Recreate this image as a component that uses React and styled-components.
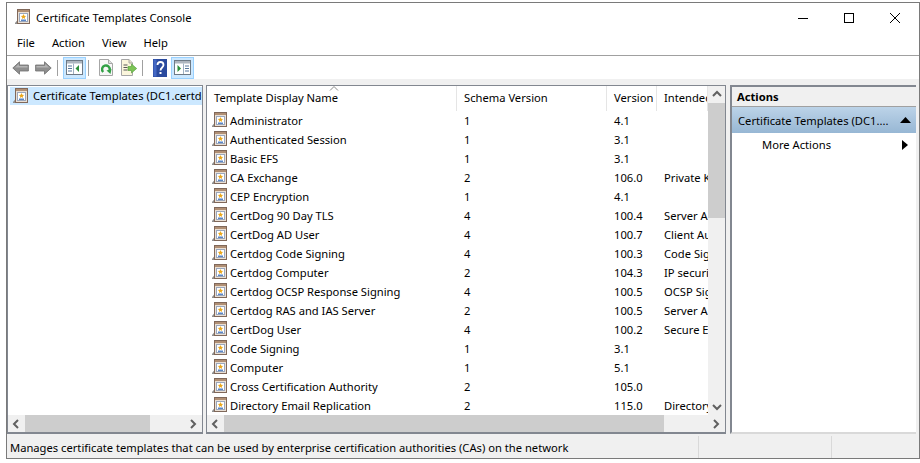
import React from 'react'
import styled, { createGlobalStyle } from 'styled-components'

const GlobalStyle = createGlobalStyle`
  html, body { margin: 0; padding: 0; background: #fff; }
  body { font-family: "Noto Sans", "Open Sans", "Liberation Sans", sans-serif; font-size: 11.2px; color: #000; }
  * { box-sizing: border-box; }
  svg { flex: none; display: block; }
`

const rows = [
  ['Administrator', '1', '4.1', ''],
  ['Authenticated Session', '1', '3.1', ''],
  ['Basic EFS', '1', '3.1', ''],
  ['CA Exchange', '2', '106.0', 'Private Key Archival'],
  ['CEP Encryption', '1', '4.1', ''],
  ['CertDog 90 Day TLS', '4', '100.4', 'Server Authentication'],
  ['CertDog AD User', '4', '100.7', 'Client Authentication'],
  ['Certdog Code Signing', '4', '100.3', 'Code Signing'],
  ['Certdog Computer', '2', '104.3', 'IP security'],
  ['Certdog OCSP Response Signing', '4', '100.5', 'OCSP Signing'],
  ['Certdog RAS and IAS Server', '2', '100.5', 'Server Authentication'],
  ['CertDog User', '4', '100.2', 'Secure Email'],
  ['Code Signing', '1', '3.1', ''],
  ['Computer', '1', '5.1', ''],
  ['Cross Certification Authority', '2', '105.0', ''],
  ['Directory Email Replication', '2', '115.0', 'Directory Service'],
]

const CertIcon = () => (
  <svg width="16" height="16" viewBox="0 0 16 16">
    <path d="M0 14 L2.5 11 V15 H0 Z" fill="#8f8f8f" />
    <rect x="2.5" y="0.5" width="12" height="14" fill="#e9dfd4" stroke="#80685a" />
    <rect x="3" y="1" width="11" height="2" fill="#b08f74" />
    <rect x="4.5" y="4.5" width="8" height="8" fill="#fff" stroke="#9aa7bd" />
    <path d="M8.5 5 l.8 1.7 l1.8 .2 l-1.3 1.3 l.3 1.8 l-1.6 -.9 l-1.6 .9 l.3 -1.8 l-1.3 -1.3 l1.8 -.2 z" fill="#eba81e" />
    <rect x="6" y="10.5" width="5" height="1.5" fill="#5b86c6" />
  </svg>
)

const BackIcon = ({ flip }) => (
  <svg width="17" height="14" viewBox="0 0 17 14" style={{ transform: flip ? 'scaleX(-1)' : 'none' }}>
    <path d="M0.8 7 L7.5 0.8 V4 H16.4 V10 H7.5 V13.2 Z" fill="#8f8f8f" stroke="#6f6f6f" strokeWidth="0.8" />
    <path d="M6.8 3 V5 H15.6 V6.6 H3 Z" fill="#b5b5b5" />
  </svg>
)

const PaneIcon = ({ right }) => (
  <svg width="17" height="15" viewBox="0 0 17 15">
    <rect x="0.5" y="0.5" width="16" height="14" fill="#fff" stroke="#6e7a86" />
    <rect x="1" y="1" width="15" height="2.5" fill="#aeb6bf" />
    {right ? (
      <>
        <path d="M9.5 3.5 V14" stroke="#9fb0c2" />
        <path d="M11 6 H15 M11 8.5 H15 M11 11 H15" stroke="#56779c" />
        <path d="M3.5 5 L7 8.5 L3.5 12 Z" fill="#2c8f39" />
      </>
    ) : (
      <>
        <path d="M7.5 3.5 V14" stroke="#9fb0c2" />
        <path d="M2 6 H6 M2 8.5 H6 M2 11 H6" stroke="#56779c" />
        <path d="M13 5 L9.5 8.5 L13 12 Z" fill="#2c8f39" />
      </>
    )}
  </svg>
)

const RefreshIcon = () => (
  <svg width="14" height="17" viewBox="0 0 14 17">
    <path d="M0.5 0.5 H9.5 L13.5 4.5 V16.5 H0.5 Z" fill="#f7f7f7" stroke="#a6a6a6" />
    <path d="M9.5 .5 V4.5 H13.5" fill="#dedede" stroke="#a6a6a6" />
    <path d="M4.2 13 A3.8 3.8 0 1 1 10.6 11" fill="none" stroke="#32a045" strokeWidth="2.4" />
    <path d="M7.5 11.5 L12.5 10 L11.5 15 Z" fill="#32a045" />
  </svg>
)

const ExportIcon = () => (
  <svg width="16" height="17" viewBox="0 0 16 17">
    <path d="M0.5 0.5 H8 L11.5 4 V16.5 H0.5 Z" fill="#fbf6dc" stroke="#a6a6a6" />
    <path d="M8 .5 V4 H11.5" fill="#e6e0c4" stroke="#a6a6a6" />
    <path d="M2.5 6 H6.5 M2.5 8.5 H6.5 M2.5 11 H6.5" stroke="#555" />
    <path d="M7 7.5 H10.5 V5 L15.7 9.5 L10.5 14 V11.5 H7 Z" fill="#7cc455" stroke="#4d9a35" strokeWidth="0.6" />
  </svg>
)

const HelpIcon = () => (
  <svg width="14" height="18" viewBox="0 0 14 18">
    <rect width="14" height="18" fill="#2a4a9e" />
    <rect x="0.5" y="0.5" width="3" height="17" fill="#4468c4" />
    <path d="M4.5 6 C4.5 2 10.5 2 10.5 6 C10.5 8.5 7.5 8.5 7.5 11.5" fill="none" stroke="#fff" strokeWidth="1.8" />
    <rect x="6.5" y="13" width="2" height="2" fill="#fff" />
  </svg>
)

const Arrow = ({ dir }) => {
  const d = {
    left: 'M6 1 L2 5 L6 9',
    right: 'M2 1 L6 5 L2 9',
    up: 'M1 6 L5 2 L9 6',
    down: 'M1 3 L5 7 L9 3',
  }[dir]
  return (
    <svg width="10" height="10" viewBox="0 0 10 10">
      <path d={d} fill="none" stroke="#606060" strokeWidth="2" />
    </svg>
  )
}

const App = () => (
  <>
    <GlobalStyle />
    <Page>
      <Window>
        <TitleBar>
          <CertIcon />
          <Title>Certificate Templates Console</Title>
          <Caption>
            <svg width="12" height="12" viewBox="0 0 12 12"><path d="M1 6.5 H11" stroke="#000" /></svg>
            <svg width="12" height="12" viewBox="0 0 12 12"><rect x="1.5" y="1.5" width="9" height="9" fill="none" stroke="#000" /></svg>
            <svg width="12" height="12" viewBox="0 0 12 12"><path d="M1 1 L11 11 M11 1 L1 11" stroke="#000" /></svg>
          </Caption>
        </TitleBar>
        <MenuBar>
          <MenuItem>File</MenuItem>
          <MenuItem>Action</MenuItem>
          <MenuItem>View</MenuItem>
          <MenuItem>Help</MenuItem>
        </MenuBar>
        <Toolbar>
          <ToolButton><BackIcon /></ToolButton>
          <ToolButton><BackIcon flip /></ToolButton>
          <ToolSep />
          <ToolButton $active><PaneIcon /></ToolButton>
          <ToolSep />
          <ToolButton><RefreshIcon /></ToolButton>
          <ToolButton><ExportIcon /></ToolButton>
          <ToolSep />
          <ToolButton><HelpIcon /></ToolButton>
          <ToolButton $active><PaneIcon right /></ToolButton>
        </Toolbar>
        <Workspace>
          <Pane>
            <TreeArea>
              <TreeNode>
                <CertIcon />
                <span>Certificate Templates (DC1.certdog.local)</span>
              </TreeNode>
            </TreeArea>
            <HScroll>
              <ScrollBtn><Arrow dir="left" /></ScrollBtn>
              <HTrack><HThumb $width={125} /></HTrack>
              <ScrollBtn><Arrow dir="right" /></ScrollBtn>
            </HScroll>
          </Pane>
          <Pane>
            <ListBody>
              <ListArea>
                <HeaderRow>
                  <SortMark>
                    <svg width="10" height="5" viewBox="0 0 10 5"><path d="M1 4.5 L5 .5 L9 4.5" fill="none" stroke="#8a8a8a" /></svg>
                  </SortMark>
                  <HeaderCell>Template Display Name</HeaderCell>
                  <HeaderCell>Schema Version</HeaderCell>
                  <HeaderCell>Version</HeaderCell>
                  <HeaderCell>Intended Purposes</HeaderCell>
                </HeaderRow>
                {rows.map((r) => (
                  <Row key={r[0]}>
                    <NameCell><CertIcon /><span>{r[0]}</span></NameCell>
                    <Cell>{r[1]}</Cell>
                    <Cell>{r[2]}</Cell>
                    <Cell>{r[3]}</Cell>
                  </Row>
                ))}
              </ListArea>
              <VScroll>
                <VBtn><Arrow dir="up" /></VBtn>
                <VTrack><VThumb /></VTrack>
                <VBtn><Arrow dir="down" /></VBtn>
              </VScroll>
            </ListBody>
            <HScroll>
              <ScrollBtn><Arrow dir="left" /></ScrollBtn>
              <HTrack><HThumb $width={440} /></HTrack>
              <ScrollBtn><Arrow dir="right" /></ScrollBtn>
            </HScroll>
          </Pane>
          <ActionsPane>
            <ActionsHead>Actions</ActionsHead>
            <ActionGroup>
              <span>Certificate Templates (DC1....</span>
              <svg width="11" height="6" viewBox="0 0 11 6"><path d="M0 6 L5.5 0 L11 6 Z" fill="#000" /></svg>
            </ActionGroup>
            <ActionItem>
              <span>More Actions</span>
              <svg width="6" height="10" viewBox="0 0 6 10"><path d="M0 0 L6 5 L0 10 Z" fill="#000" /></svg>
            </ActionItem>
          </ActionsPane>
        </Workspace>
        <StatusBar>
          <StatusText>Manages certificate templates that can be used by enterprise certification authorities (CAs) on the network</StatusText>
          <StatusCell $width={133} />
          <StatusCell $width={88} />
        </StatusBar>
      </Window>
    </Page>
  </>
)

export default App

const Page = styled.div`
  width: 920px;
  height: 463px;
  padding: 2px 0 4px 6px;
  overflow: hidden;
`

const Window = styled.div`
  height: 100%;
  border: 1px solid #7a7a7a;
  background: #f0f0f0;
  display: flex;
  flex-direction: column;
`

const TitleBar = styled.div`
  height: 30px;
  flex: none;
  display: flex;
  align-items: center;
  gap: 5px;
  background: #fff;
  padding: 0 0 2px 8px;
`

const Title = styled.div`
  flex: 1;
`

const Caption = styled.div`
  display: flex;
  gap: 34px;
  padding: 2px 18px 0 0;
  align-items: center;
`

const MenuBar = styled.div`
  height: 23px;
  flex: none;
  display: flex;
  align-items: center;
  gap: 17px;
  background: #fff;
  padding: 0 0 3px 10px;
  border-bottom: 1px solid #a0a0a0;
`

const MenuItem = styled.div``

const Toolbar = styled.div`
  height: 23px;
  flex: none;
  display: flex;
  align-items: center;
  background: #fff;
  padding-left: 2px;
`

const ToolButton = styled.div`
  width: 23px;
  height: 22px;
  display: flex;
  align-items: center;
  justify-content: center;
  background: ${(p) => (p.$active ? '#cce8ff' : 'transparent')};
  border: 1px solid ${(p) => (p.$active ? '#99d1ff' : 'transparent')};
`

const ToolSep = styled.div`
  width: 1px;
  height: 16px;
  margin: 0 5px 0 2px;
  background: #a0a0a0;
`

const Workspace = styled.div`
  flex: 1;
  min-height: 0;
  display: grid;
  grid-template-columns: 196px 520px 187px;
  column-gap: 3px;
  padding-top: 6px;
`

const Pane = styled.div`
  min-width: 0;
  min-height: 0;
  display: flex;
  flex-direction: column;
  background: #fff;
  border: 1px solid #828790;
  border-bottom-width: 2px;
`

const TreeArea = styled.div`
  flex: 1;
  min-height: 0;
  overflow: hidden;
`

const TreeNode = styled.div`
  height: 18px;
  margin: 1px 0 0 2px;
  padding: 0 0 1px 3px;
  display: flex;
  align-items: center;
  gap: 4px;
  background: #cce8ff;
  white-space: nowrap;
  overflow: hidden;
`

const HScroll = styled.div`
  height: 17px;
  flex: none;
  display: flex;
  background: #f0f0f0;
`

const ScrollBtn = styled.div`
  width: 17px;
  flex: none;
  display: flex;
  align-items: center;
  justify-content: center;
`

const HTrack = styled.div`
  flex: 1;
  min-width: 0;
`

const HThumb = styled.div`
  height: 100%;
  width: ${(p) => p.$width}px;
  background: #cdcdcd;
`

const ListBody = styled.div`
  flex: 1;
  min-height: 0;
  display: flex;
`

const ListArea = styled.div`
  flex: 1;
  min-width: 0;
  overflow: hidden;
`

const columns = '250px 150px 50px 51px'

const HeaderRow = styled.div`
  position: relative;
  height: 25px;
  display: grid;
  grid-template-columns: ${columns};
`

const SortMark = styled.div`
  position: absolute;
  left: 122px;
  top: 0;
  display: flex;
`

const HeaderCell = styled.div`
  padding: 2px 0 0 7px;
  border-right: 1px solid #e5e5e5;
  white-space: nowrap;
  overflow: hidden;
  line-height: 20px;
`

const Row = styled.div`
  height: 19px;
  padding-bottom: 1px;
  display: grid;
  grid-template-columns: ${columns};
  align-items: center;
`

const Cell = styled.div`
  padding-left: 7px;
  white-space: nowrap;
  overflow: hidden;
`

const NameCell = styled.div`
  display: flex;
  align-items: center;
  gap: 2px;
  padding-left: 5px;
  white-space: nowrap;
  overflow: hidden;
`

const VScroll = styled.div`
  width: 17px;
  flex: none;
  display: flex;
  flex-direction: column;
  background: #f0f0f0;
`

const VBtn = styled.div`
  height: 17px;
  flex: none;
  display: flex;
  align-items: center;
  justify-content: center;
`

const VTrack = styled.div`
  flex: 1;
  min-height: 0;
`

const VThumb = styled.div`
  height: 115px;
  background: #cdcdcd;
`

const ActionsPane = styled(Pane)`
  margin-left: 1px;
  border-top-width: 2px;
  border-left-width: 2px;
  border-right: none;
  border-bottom-color: #d9d9d9;
`

const ActionsHead = styled.div`
  height: 20px;
  flex: none;
  padding-left: 5px;
  display: flex;
  align-items: center;
  font-weight: 700;
  background: #f0f0f0;
  border-bottom: 1px solid #a0a0a0;
`

const ActionGroup = styled.div`
  height: 26px;
  flex: none;
  display: flex;
  align-items: center;
  justify-content: space-between;
  padding: 0 5px 0 6px;
  background: linear-gradient(#bcd3e8, #97b7d4);
`

const ActionItem = styled.div`
  height: 23px;
  flex: none;
  display: flex;
  align-items: center;
  justify-content: space-between;
  padding: 0 8px 0 30px;
`

const StatusBar = styled.div`
  height: 24px;
  flex: none;
  display: flex;
  align-items: center;
  padding-top: 2px;
`

const StatusText = styled.div`
  flex: 1;
  padding-left: 3px;
  white-space: nowrap;
`

const StatusCell = styled.div`
  width: ${(p) => p.$width}px;
  height: 100%;
  border-left: 1px solid #d9d9d9;
`
